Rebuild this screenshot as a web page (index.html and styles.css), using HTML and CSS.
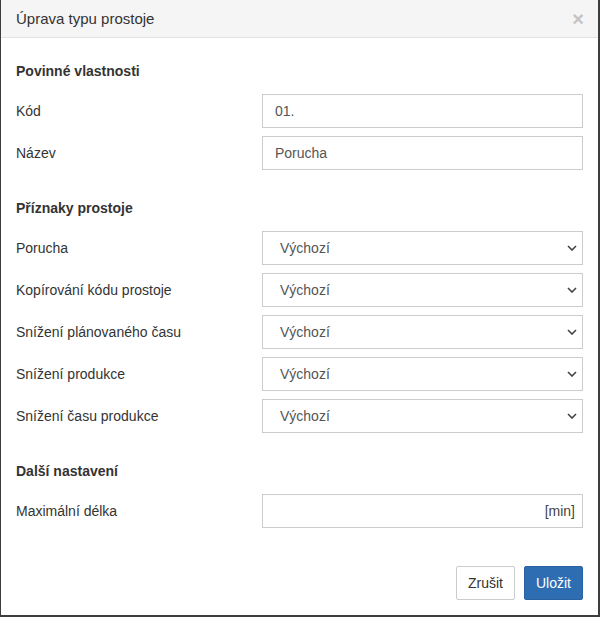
FILE: index.html
```html
<!DOCTYPE html>
<html lang="cs">
<head>
<meta charset="utf-8">
<title>Úprava typu prostoje</title>
<link rel="stylesheet" href="styles.css">
</head>
<body>
<div class="modal">
  <div class="modal-header">
    <h4 class="modal-title">Úprava typu prostoje</h4>
    <button class="close" type="button">×</button>
  </div>
  <div class="modal-body">
    <section class="group">
      <h5 class="group-title">Povinné vlastnosti</h5>
      <div class="row"><label>Kód</label><input class="field" type="text" value="01."></div>
      <div class="row"><label>Název</label><input class="field" type="text" value="Porucha"></div>
    </section>
    <section class="group">
      <h5 class="group-title">Příznaky prostoje</h5>
      <div class="row"><label>Porucha</label>
        <div class="select-wrap"><select class="field select"><option>Výchozí</option></select>
          <svg class="chevron" width="10" height="6" viewBox="0 0 10 6"><path d="M1 1l4 4 4-4" fill="none" stroke="#444" stroke-width="1.6"/></svg></div></div>
      <div class="row"><label>Kopírování kódu prostoje</label>
        <div class="select-wrap"><select class="field select"><option>Výchozí</option></select>
          <svg class="chevron" width="10" height="6" viewBox="0 0 10 6"><path d="M1 1l4 4 4-4" fill="none" stroke="#444" stroke-width="1.6"/></svg></div></div>
      <div class="row"><label>Snížení plánovaného času</label>
        <div class="select-wrap"><select class="field select"><option>Výchozí</option></select>
          <svg class="chevron" width="10" height="6" viewBox="0 0 10 6"><path d="M1 1l4 4 4-4" fill="none" stroke="#444" stroke-width="1.6"/></svg></div></div>
      <div class="row"><label>Snížení produkce</label>
        <div class="select-wrap"><select class="field select"><option>Výchozí</option></select>
          <svg class="chevron" width="10" height="6" viewBox="0 0 10 6"><path d="M1 1l4 4 4-4" fill="none" stroke="#444" stroke-width="1.6"/></svg></div></div>
      <div class="row"><label>Snížení času produkce</label>
        <div class="select-wrap"><select class="field select"><option>Výchozí</option></select>
          <svg class="chevron" width="10" height="6" viewBox="0 0 10 6"><path d="M1 1l4 4 4-4" fill="none" stroke="#444" stroke-width="1.6"/></svg></div></div>
    </section>
    <section class="group">
      <h5 class="group-title">Další nastavení</h5>
      <div class="row"><label>Maximální délka</label>
        <div class="field unit-field"><span class="unit">[min]</span></div></div>
    </section>
  </div>
  <div class="modal-footer">
    <button class="btn btn-default" type="button">Zrušit</button>
    <button class="btn btn-primary" type="button">Uložit</button>
  </div>
</div>
</body>
</html>
```
FILE: styles.css
```css
html, body {
  margin: 0;
  height: 100%;
}

body {
  background: #3d3d3d;
  font-family: "Liberation Sans", Arial, Helvetica, sans-serif;
  font-size: 14px;
  color: #333;
}

.modal {
  margin-left: 1px;
  width: 597px;
  height: 615px;
  background: #fff;
  display: flex;
  flex-direction: column;
}

.modal-header {
  height: 37px;
  background: #f5f5f5;
  border-bottom: 1px solid #e3e3e3;
  display: flex;
  align-items: center;
  justify-content: space-between;
  padding: 0 15px 0 15px;
}

.modal-title {
  margin: 0;
  font-size: 15px;
  font-weight: normal;
  color: #333;
}

.close {
  border: 0;
  background: none;
  padding: 0;
  font-family: "Liberation Sans", Arial, sans-serif;
  font-size: 20px;
  font-weight: bold;
  line-height: 1;
  color: #c4c4c4;
  margin-right: -1px;
}

.modal-body {
  padding: 23px 15px 0;
}

.group + .group {
  margin-top: 28px;
}

.group-title {
  margin: 0 0 13px;
  font-size: 14px;
  line-height: 20px;
  font-weight: bold;
  color: #333;
}

.row {
  display: grid;
  grid-template-columns: 246px 1fr;
  align-items: center;
}

.row + .row {
  margin-top: 8px;
}

.row label {
  color: #333;
}

.field {
  box-sizing: border-box;
  width: 100%;
  height: 34px;
  margin: 0;
  border: 1px solid #ccc;
  border-radius: 0;
  background: #fff;
  font-family: "Liberation Sans", Arial, sans-serif;
  font-size: 14px;
  color: #555;
  padding: 0 12px;
  outline: none;
}

.select-wrap {
  position: relative;
}

.select {
  appearance: none;
  -webkit-appearance: none;
  padding-left: 17px;
}

.chevron {
  position: absolute;
  right: 6px;
  top: 14px;
  pointer-events: none;
}

.unit-field {
  display: flex;
  align-items: center;
  justify-content: flex-end;
  padding-right: 7px;
}

.unit {
  color: #444;
}

.modal-footer {
  margin-top: auto;
  padding: 0 15px 15px;
  display: flex;
  justify-content: flex-end;
  gap: 9px;
}

.btn {
  box-sizing: border-box;
  height: 34px;
  padding: 0 11px;
  font-family: "Liberation Sans", Arial, sans-serif;
  font-size: 14px;
  border-radius: 2px;
  border: 1px solid transparent;
}

.btn-default {
  background: #fff;
  border-color: #ccc;
  color: #333;
}

.btn-primary {
  background: #2f6db3;
  border-color: #2a63a3;
  color: #fff;
}
```
